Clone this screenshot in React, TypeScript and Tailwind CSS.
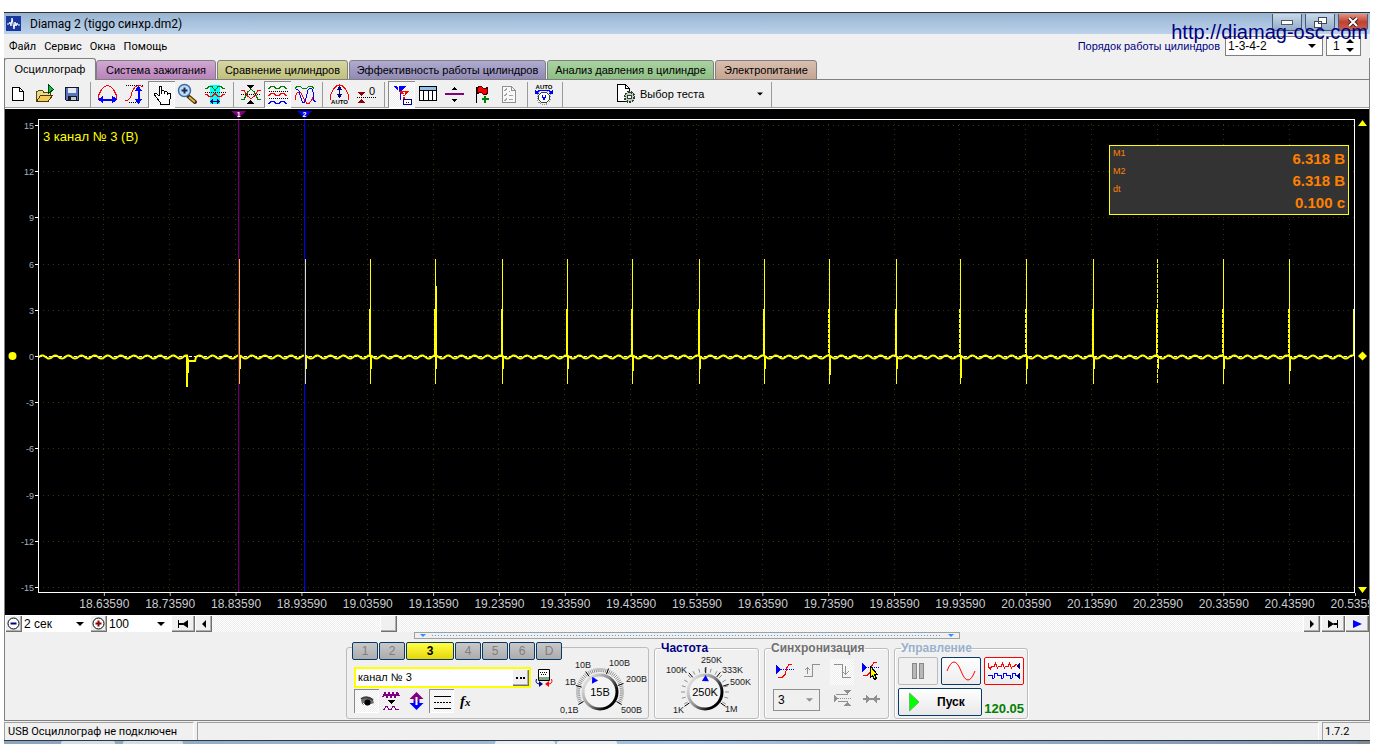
import React, { useState } from "react";
import type { ReactNode } from "react";

const tabs = [
  { label: "Осциллограф", cls: "h-[22px] w-[92px] bg-[#f0f0f0] pb-px border-b-0" },
  { label: "Система зажигания", cls: "h-[20px] w-[120px] bg-linear-to-b from-[#d0a8d2] to-[#b983bb] border-b" },
  { label: "Сравнение цилиндров", cls: "h-[20px] w-[131px] bg-linear-to-b from-[#d6d6a4] to-[#c0c07c] border-b" },
  { label: "Эффективность работы цилиндров", cls: "h-[20px] w-[197px] bg-linear-to-b from-[#b0acd0] to-[#9089b5] border-b" },
  { label: "Анализ давления в цилиндре", cls: "h-[20px] w-[167px] bg-linear-to-b from-[#aad2a2] to-[#8cbf82] border-b" },
  { label: "Электропитание", cls: "h-[20px] w-[102px] bg-linear-to-b from-[#d8bfb0] to-[#c6a490] border-b" },
];

const dither =
  "bg-[repeating-conic-gradient(#ffffff_0_25%,#eeeeee_0_50%)] bg-[length:2px_2px]";

function Icon({ w = 27, h = 27, smooth, children }: { w?: number; h?: number; smooth?: boolean; children: ReactNode }) {
  return (
    <svg
      width={w}
      height={h}
      viewBox={`0 0 ${w} ${h}`}
      fill="none"
      aria-hidden="true"
      shapeRendering={smooth ? "auto" : "crispEdges"}
      className="block shrink-0"
    >
      {children}
    </svg>
  );
}

function Tool({ label, pressed, children }: { label: string; pressed?: boolean; children: ReactNode }) {
  return (
    <button
      type="button"
      aria-label={label}
      className={
        pressed
          ? `h-[27px] w-[27px] overflow-hidden shadow-[inset_1px_1px_0_#8a8a8a,inset_-1px_-1px_0_#ffffff] ${dither}`
          : "h-[27px] w-[27px] overflow-hidden"
      }
    >
      <Icon>{children}</Icon>
    </button>
  );
}

function Sep() {
  return (
    <span className="flex w-2 justify-center">
      <span className="h-[25px] w-px bg-[#9a9a9a]" />
    </span>
  );
}

const RED = "#ff0000";
const BLUE = "#0000ff";
const GREEN = "#008000";

function Toolbar() {
  return (
    <div className="flex h-[29px] items-center border-b border-white bg-[#f0f0f0] shadow-[inset_0_-1px_0_#a0a0a0]">
      <Tool label="Новый">
        <path d="M7.500 6.500h7l4 4v9h-11z" fill="#fff" stroke="#000" />
        <path d="M14.500 6.500v4h4" stroke="#000" />
      </Tool>
      <Tool label="Открыть">
        <path d="M4.500 20.500v-10h1l1-1h4l1 1.500h7v3" fill="#e8d890" stroke="#5a4a00" />
        <path d="M4.500 20.500l4-6h12l-4.500 6z" fill="#f4c95c" stroke="#4a3a00" />
        <path d="M16.500 3.500l5 5-5 4z" fill="#00c838" stroke="#003810" />
      </Tool>
      <Tool label="Сохранить">
        <path d="M6.500 6.500h13v13h-12l-1-1z" fill="#5a76b8" stroke="#101830" />
        <path d="M9 7h8v5H9z" fill="#e4eaf4" />
        <path d="M9 15h8v4H9z" fill="#c8c8c8" stroke="#101830" />
        <path d="M10 16h2v3h-2z" fill="#101830" />
      </Tool>
      <Sep />
      <Tool label="Масштаб по времени">
        <path d="M4.500 18.500v-4l3-6 3-3 3-1 3 1 3 3 3 6v4" stroke={RED} />
        <path d="M8 18.500h11" stroke={BLUE} strokeWidth="2" />
        <path d="M4 18.500l5-4v8zM23 18.500l-5-4v8z" fill={BLUE} />
      </Tool>
      <Tool label="Масштаб по напряжению">
        <path d="M5 4.500h18M8 21.500h9" stroke="#000" strokeDasharray="1 1" />
        <path d="M3.500 19.500h3l3-3 2-7 3-4 3-1h2l3 2" stroke={RED} />
        <path d="M17.500 9v10" stroke={BLUE} strokeWidth="2" />
        <path d="M17.500 5l4 5h-8zM17.500 23l4-5h-8z" fill={BLUE} />
      </Tool>
      <Tool label="Рука" pressed>
        <path
          d="M11.500 15V6.500q0-1 1-1t1 1V13v-2.500q1.500-1.500 3 0V13v-2q1.500-1 3 .500V14v-1.500q2-1 3 .5v4l-1.500 3v3h-9v-2l-4-5-2-3q1-2 3 0l2.500 2.500"
          fill="#fff"
          stroke="#000"
        />
      </Tool>
      <button type="button" aria-label="Лупа" className="h-[27px] w-[27px]">
        <Icon smooth>
          <path d="M13 15l7 6" stroke="#3a2a00" strokeWidth="4" strokeLinecap="round" />
          <path d="M14 16l6 5" stroke="#e8b040" strokeWidth="2" />
          <circle cx="9.500" cy="9.500" r="6" fill="#c4dcf4" stroke="#3a6ea8" strokeWidth="1.500" />
          <path d="M6.500 9.500h6M9.500 6.500v6" stroke="#103060" strokeWidth="2" />
        </Icon>
      </button>
      <Tool label="Интервал">
        <path d="M8 4h10v19H8z" fill="#00ffff" />
        <path d="M3 7.500h2l2-2h3l3 4 3-4h3l2 2h2" stroke={GREEN} />
        <path d="M3 11.500h21" stroke="#000" strokeDasharray="1 1" />
        <path d="M3 13.500h2l2 2h3l3-3 3 3h3l2-2h2" stroke={RED} />
        <path d="M10 20.500h7" stroke="#000080" />
        <path d="M8 20.500l3-3v6zM18 20.500l-3-3v6z" fill="#000080" />
      </Tool>
      <Sep />
      <Tool label="Совместить">
        <path d="M4 18.500h3l4-8 3-2 3 2 4 8h3" stroke={GREEN} />
        <path d="M4 9.500h3l4 6 3 2 3-2 4-6h3" stroke={RED} />
        <path d="M4 13.500h20" stroke="#000" strokeDasharray="1 1" />
        <path d="M10 4h7l-3.500 4zM10 23h7l-3.500-4z" fill="#000" />
      </Tool>
      <Tool label="Разнести" pressed>
        <path d="M4 7.500h1l2-2h3l2 2h3l2-2h3l2 2h1" stroke={GREEN} />
        <path d="M5 10.500h19M5 17.500h19" stroke="#000" strokeDasharray="1 1" />
        <path d="M4 14.500h1l2-2h3l2 2h3l2-2h3l2 2h1" stroke={RED} />
        <path d="M4 22.500h1l2-2h3l2 2h3l2-2h3l2 2h1" stroke={BLUE} />
      </Tool>
      <Tool label="Наложить">
        <path d="M4 7.500l2-2h3l3 2h3l3-2h3l2 2" stroke={GREEN} />
        <path d="M4.500 19v-4l2-4h3l2 4 2 4 2 3h3l3-4 1-4" stroke={RED} />
        <path d="M4.500 8h2l2 3 1 5 2 5h2l2-5 1-6 2-3h2l2 5v7l2 2" stroke={BLUE} />
      </Tool>
      <Sep />
      <Tool label="Авто масштаб">
        <path d="M4.500 19v-5l3-6 3-3 3-1 3 1 3 3 3 6v5" stroke={RED} />
        <path d="M13.500 6v9" stroke="#000080" />
        <path d="M13.500 5l3 4h-6zM13.500 17l3-4h-6z" fill="#000080" />
        <text x="13.500" y="23" textAnchor="middle" className="fill-black font-['Liberation_Sans'] text-[6px] font-bold">AUTO</text>
      </Tool>
      <Tool label="Ноль">
        <path d="M4 11h8l-4 4zM4 22h8l-4-4z" fill="#900000" />
        <path d="M4 16.500h19" stroke="#000" strokeDasharray="1 1" />
        <text x="19" y="14" textAnchor="middle" className="fill-black font-['Liberation_Sans'] text-[11px]">0</text>
      </Tool>
      <Sep />
      <Tool label="Маркеры" pressed>
        <path d="M5 5h13l-5 6v8h-1v-8z" fill={BLUE} />
        <path d="M10 10h11l-4 5v6h-2v-6z" fill={RED} />
        <path d="M9 6l1-1v5" stroke="#fff" />
        <path d="M14.500 11.500h2v2h-2v2h2" stroke="#fff" />
        <path d="M15.500 18.500h8v5h-8z" fill="#fff" stroke="#000080" />
        <path d="M18 21.500h4" stroke="#000080" strokeDasharray="1 1" />
      </Tool>
      <Tool label="Таблица">
        <path d="M4.500 5.500h17v14h-17z" fill="#fff" stroke="#000" />
        <path d="M5 6h16v3H5z" fill="#90c0f0" />
        <path d="M4 9.500h18M8.500 9v11M13.500 9v11M17.500 9v11" stroke="#000" />
      </Tool>
      <Tool label="Линия">
        <path d="M3 13h19" stroke="#800080" strokeWidth="2" />
        <path d="M9.500 9h6l-3-3zM9.500 18h6l-3 3z" fill="#000" />
      </Tool>
      <Tool label="Флаг">
        <path d="M7.500 6v16" stroke="#000" />
        <path d="M8.500 6.500q3-2 5 0t5 0v6q-3 2-5 0t-5 0z" fill={RED} stroke="#400000" />
        <path d="M16 15v7M13 18h7" stroke={GREEN} strokeWidth="2" />
      </Tool>
      <Tool label="Список">
        <path d="M6.500 5.500h9l4 4v12h-13z" fill="#f8f8f8" stroke="#909090" />
        <path d="M15.500 5.500v4h4" stroke="#909090" />
        <path d="M8 9l1 1 2-3M8 14l1 1 2-3M8 19l1 1 2-3M13 10.500h1M13 14.500h4M13 18.500h4" stroke="#a0a0a0" />
      </Tool>
      <Sep />
      <Tool label="Авто регулятор">
        <text x="13" y="8" textAnchor="middle" className="fill-black font-['Liberation_Sans'] text-[6px] font-bold">AUTO</text>
        <circle cx="13" cy="16.500" r="7" stroke="#909090" strokeDasharray="1 1" />
        <circle cx="13" cy="16.500" r="5.500" fill="#fff" stroke="#404040" />
        <path d="M6 10.500l3-1h8l3 1" stroke={BLUE} />
        <path d="M4 8v5h4zM22 8v5h-4z" fill={BLUE} />
        <path d="M11 14l2 5 2-5" stroke={BLUE} />
      </Tool>
      <Sep />
      <div className="ml-[48px] flex w-[153px] items-center pr-1">
        <Icon w={24} h={24}>
          <path d="M3.500 2.500h8l4 4v13h-12z" fill="#fff" stroke="#000" />
          <path d="M11.500 2.500v4h4" stroke="#000" />
          <circle cx="15.500" cy="15" r="5" fill="#c0d0c0" stroke="#304030" strokeWidth="2" strokeDasharray="2 1" />
          <circle cx="15.500" cy="15" r="2" fill="#fff" stroke="#304030" />
        </Icon>
        <select aria-label="Тест" className="flex-1 appearance-none bg-transparent pl-0.5 font-['Liberation_Sans',sans-serif] text-[11px]">
          <option>Выбор теста</option>
        </select>
        <Caret small />
      </div>
      <Sep />
    </div>
  );
}

function Caret({ small }: { small?: boolean }) {
  return (
    <svg width={small ? 6 : 8} height="4" viewBox="0 0 8 4" aria-hidden="true" className="pointer-events-none shrink-0">
      <path d="M0 0h8L4 4z" fill="#000" />
    </svg>
  );
}

const spikes = [
  { x: 201, tail: 369 }, { x: 267, tail: 369 }, { x: 332, tail: 369 }, { x: 397, tail: 369, extra: 286 },
  { x: 464, tail: 369 }, { x: 529, tail: 369 }, { x: 594, tail: 371 }, { x: 661, tail: 369 }, { x: 726, tail: 369 },
  { x: 791, tail: 375, dash: true }, { x: 858, tail: 369 }, { x: 922, tail: 378, dash: true }, { x: 988, tail: 369, dash: true },
  { x: 1055, tail: 369 }, { x: 1119, tail: 369, dashTop: true }, { x: 1185, tail: 369, dash: true }, { x: 1251, tail: 371, dash: true },
];

function wave() {
  const pts: string[] = [];
  for (let x = 0; x <= 1315; x += 1) {
    let y = 248 - 1.6 * Math.sin(((x - 1) / 13.1) * 2 * Math.PI);
    if (x > 149 && x < 158) y = 252;
    pts.push(`${x} ${y.toFixed(1)}`);
  }
  return "M" + pts.join("L");
}
const wavePath = wave();
const rows = Array.from({ length: 11 }, (_, i) => ({ v: 15 - 3 * i, y: 16.5 + Math.round(46.2 * i) }));
const cols = Array.from({ length: 20 }, (_, i) => ({ pct: `${(i + 1) * 5}%`, label: (18.6359 + i * 0.1).toFixed(5) }));

function Marker({ x, n, color }: { x: string; n: string; color: string }) {
  return (
    <svg x={x} y="0" overflow="visible">
      <path d="M-7 2h15L.5 9z" fill={color} />
      <rect x="0" y="6" width="1" height="477" fill={color} />
      <text x="0.5" y="8" textAnchor="middle" className="fill-white font-['Liberation_Sans'] text-[7px] font-bold">{n}</text>
    </svg>
  );
}

function Chart() {
  return (
    <div className="relative flex h-[506px] overflow-hidden bg-black font-['Liberation_Sans',sans-serif]">
      <svg width="33" height="506" className="shrink-0">
        <circle cx="7.500" cy="247" r="4" fill="#ffff00" />
        {rows.map((r) => (
          <g key={r.v}>
            <text x="29" y={r.y + 3} textAnchor="end" className="fill-[#a8b4c0] text-[9px]">{r.v}</text>
            <rect x="30" y={r.y - 0.5} width="3" height="1" fill="#fff" />
          </g>
        ))}
      </svg>
      <svg height="506" className="min-w-0 flex-1 overflow-visible">
        {rows.map((r) => (
          <line key={r.v} x1="5" x2="100%" y1={r.y} y2={r.y} stroke="#34340c" strokeDasharray="1 4" />
        ))}
        <g shapeRendering="crispEdges">
          {cols.slice(0, 19).map((c) => (
            <line key={c.label} x1={c.pct} x2={c.pct} y1="15" y2="483" stroke="#34340c" strokeDasharray="1 4" />
          ))}
        </g>
        {cols.map((c) => (
          <svg key={c.label} x={c.pct} overflow="visible">
            <rect x="0" y="484" width="1" height="3" fill="#c0c0c0" />
            <text x="0.500" y="499" textAnchor="middle" className="fill-[#c8ccd0] text-[12px]">{c.label}</text>
          </svg>
        ))}
        <svg width="100%" height="506" viewBox="0 0 1317 506" preserveAspectRatio="none">
          <path d="M1 247.500H1316" stroke="#fff" strokeDasharray="3 2" />
          <path d={wavePath} stroke="#ffff00" strokeWidth="2" fill="none" />
          <path d="M148 247h1v31h-1zM149 250h1v28h-1zM150 250h1v14h-1z" fill="#ffff00" />
          {spikes.map((s) => (
            <g key={s.x} fill="#ffff00" stroke="none" shapeRendering="crispEdges">
              <line x1={s.x + 0.5} x2={s.x + 0.5} y1="150" y2="275" stroke="#ffff00" strokeDasharray={s.dashTop ? "4 1" : undefined} />
              <line x1={s.x - 0.5} x2={s.x - 0.5} y1="200" y2="247" stroke="#ffff00" strokeDasharray={s.dash ? "4 1" : undefined} />
              <rect x={s.x + 1} y="247" width="1" height={s.tail - 356} />
              {s.extra && <rect x={s.x + 1} y="177" width="1" height="70" />}
            </g>
          ))}
          <rect x="1315" y="200" width="1" height="47" fill="#ffff00" />
        </svg>
        <Marker x="15.2%" n="1" color="#800080" />
        <Marker x="20.2%" n="2" color="#0000ff" />
        <rect x="0" y="10" width="100%" height="1" fill="#fff" />
        <rect x="0" y="483" width="100%" height="1" fill="#fff" />
        <rect x="0" y="10" width="1" height="474" fill="#fff" />
        <svg x="100%" overflow="visible">
          <rect x="-1" y="10" width="1" height="474" fill="#fff" />
        </svg>
        <text x="5" y="32" className="fill-[#ffff00] text-[13px]">3 канал № 3 (В)</text>
      </svg>
      <svg width="14" height="506" className="shrink-0" fill="#ffff00">
        <path d="M3 17h9l-4.500-6zM3 478h9l-4.500 6zM3 247l4.500-4.500L12 247l-4.500 4.500z" />
      </svg>
      <dl className="absolute top-9 right-5 grid h-[70px] w-[240px] grid-cols-2 border border-[#ffff00] bg-[#333333] px-[3px] text-[#ff8000]">
        <div className="flex flex-col text-[9px] leading-[18px]">
          <dt className="-mt-0.5">М1</dt>
          <dt>М2</dt>
          <dt>dt</dt>
        </div>
        <div className="flex flex-col pt-0.5 text-right text-[15px] leading-[22px] font-bold whitespace-nowrap">
          <dd>6.318 В</dd>
          <dd>6.318 В</dd>
          <dd>0.100 с</dd>
        </div>
      </dl>
    </div>
  );
}

const raised =
  "flex h-[17px] shrink-0 items-center justify-center bg-[#f0f0f0] shadow-[inset_1px_1px_0_#ffffff,inset_-1px_-1px_0_#707070,inset_-2px_-2px_0_#b0b0b0]";

function ScrollRow() {
  return (
    <div className="flex h-[17px] items-center">
      <button type="button" aria-label="Уменьшить" className={`${raised} w-[17px]`}>
        <Icon w={15} h={15} smooth>
          <circle cx="7.500" cy="7.500" r="5.500" fill="#fff" stroke="#000" />
          <path d="M4.500 7.500h6" stroke="#000080" strokeWidth="2" />
        </Icon>
      </button>
      <div className="flex h-full w-[68px] items-center bg-white pr-1.5">
        <select aria-label="Развёртка" className="w-full appearance-none bg-transparent pl-0.5 text-[12px]"><option>2 сек</option></select>
        <Caret />
      </div>
      <button type="button" aria-label="Увеличить" className={`${raised} w-[17px]`}>
        <Icon w={15} h={15} smooth>
          <circle cx="7.500" cy="7.500" r="5.500" fill="#fff" stroke="#000" />
          <path d="M4.500 7.500h6M7.500 4.500v6" stroke="#900000" strokeWidth="2" />
        </Icon>
      </button>
      <div className="flex h-full w-[64px] items-center bg-white pr-1.5">
        <select aria-label="Масштаб" className="w-full appearance-none bg-transparent pl-0.5 text-[12px]"><option>100</option></select>
        <Caret />
      </div>
      <button type="button" aria-label="В начало" className={`${raised} w-6`}>
        <Icon w={12} h={8} smooth><path d="M1 0h1v8H1zM11 0v8L5 4zM2 3h4v2H2z" fill="#000" /></Icon>
      </button>
      <button type="button" aria-label="Назад" className={`${raised} w-[17px]`}>
        <Icon w={8} h={8} smooth><path d="M6 0v8L2 4z" fill="#000" /></Icon>
      </button>
      <div className={`flex h-full flex-1 ${dither}`}>
        <span className={`${raised} ml-[168px] w-[17px]`} />
      </div>
      <button type="button" aria-label="Вперёд" className={`${raised} w-[17px]`}>
        <Icon w={8} h={8} smooth><path d="M2 0v8l4-4z" fill="#000" /></Icon>
      </button>
      <button type="button" aria-label="В конец" className={`${raised} ml-px w-6`}>
        <Icon w={12} h={8} smooth><path d="M10 0h1v8h-1zM1 0v8l6-4zM6 3h4v2H6z" fill="#000" /></Icon>
      </button>
      <button type="button" aria-label="Воспроизвести" className={`${raised} w-6`}>
        <Icon w={9} h={8} smooth><path d="M0 0v8l9-4z" fill="#0000ff" /></Icon>
      </button>
    </div>
  );
}

const pt = (cx: number, cy: number, r: number, deg: number) => {
  const a = (deg * Math.PI) / 180;
  return [cx + r * Math.sin(a), cy - r * Math.cos(a)];
};

function Knob({ id, cx, cy, value, angle, majors, labels, dense }: {
  id: string; cx: number; cy: number; value: string; angle: number; majors: number[];
  labels: { t: string; x: number; y: number }[]; dense?: boolean;
}) {
  const step = dense ? 5 : 15;
  const ticks: number[] = [];
  for (let d = -120; d <= 120; d += step) ticks.push(d);
  const p = pt(cx, cy, 13, angle);
  return (
    <g className="font-['Liberation_Sans',sans-serif]">
      <defs>
        <linearGradient id={id} x1="0" y1="0.2" x2="1" y2="0.9">
          <stop offset="0" stopColor="#e8e8e8" />
          <stop offset="0.45" stopColor="#909090" />
          <stop offset="0.8" stopColor="#000" />
        </linearGradient>
      </defs>
      {ticks.map((d) => {
        const [x1, y1] = pt(cx, cy, 20, d);
        const [x2, y2] = pt(cx, cy, 24, d);
        return <line key={d} x1={x1} y1={y1} x2={x2} y2={y2} stroke="#909090" />;
      })}
      {majors.map((d) => {
        const [x1, y1] = pt(cx, cy, 19, d);
        const [x2, y2] = pt(cx, cy, 25, d);
        return <line key={d} x1={x1} y1={y1} x2={x2} y2={y2} stroke="#000" />;
      })}
      <circle cx={cx} cy={cy} r="17" fill="#f4f4f4" stroke={`url(#${id})`} strokeWidth="3" />
      <path d="M0-4l3.500 6h-7z" fill="#0000ff" transform={`translate(${p[0]} ${p[1]}) rotate(${angle})`} />
      <text x={cx} y={cy + 4} textAnchor="middle" className="fill-black text-[11px]">{value}</text>
      {labels.map((l) => (
        <text key={l.t} x={l.x} y={l.y} className="fill-[#202020] text-[9px]">{l.t}</text>
      ))}
    </g>
  );
}

const group = "rounded-[3px] border border-[#bcbcbc] shadow-[inset_1px_1px_0_#ffffff,1px_1px_0_#ffffff]";
const blueBtn = "border border-[#0a3a6a] rounded-[2px]";
const channels = ["1", "2", "3", "4", "5", "6", "D"];

function Panels() {
  const [name, setName] = useState("канал № 3");
  return (
    <div className="flex items-end justify-center gap-[5px] pb-px">
      <fieldset className="flex w-[303px] rounded-[3px] border border-[#bcbcbc]">
        <legend className="ml-[5px] flex h-[10px] items-start gap-px">
          {channels.map((c) => (
            <button
              key={c}
              type="button"
              className={
                c === "3"
                  ? `h-[18px] w-12 shrink-0 bg-linear-to-b from-[#ffff40] to-[#e6d800] text-[12px] leading-4 font-bold ${blueBtn}`
                  : `h-[18px] w-[26px] shrink-0 bg-linear-to-b from-[#c8c8c8] to-[#acacac] text-[12px] leading-4 text-[#808080] ${blueBtn}`
              }
            >
              {c}
            </button>
          ))}
        </legend>
        <div className="flex w-[206px] flex-col gap-px pt-[15px] pl-[7px]">
          <div className="flex items-center gap-1">
            <div className="flex h-[21px] w-[177px] border-2 border-[#ffff00] bg-white">
              <input
                aria-label="Имя канала"
                value={name}
                onChange={(e) => setName(e.target.value)}
                className="min-w-0 flex-1 bg-transparent pl-0.5 text-[11px] outline-none"
              />
              <button type="button" aria-label="Выбрать" className={`${raised} w-[17px]`}>
                <Icon w={9} h={3}><path d="M0 1h2v2H0zM3.500 1h2v2h-2zM7 1h2v2H7z" fill="#000" /></Icon>
              </button>
            </div>
            <button type="button" aria-label="Настройка канала">
              <Icon w={18} h={20} smooth>
                <path d="M3.500 1.500h11v11h-11z" fill="#fff" stroke="#000" />
                <path d="M5 4.500h8M6 6.500h5" stroke="#000" strokeDasharray="1 1" />
                <path d="M4 9h10v3H4z" fill="#80a880" />
                <path d="M1.500 11q-2 5 4 5" stroke="#000080" />
                <path d="M16.500 11q2 5-4 5" stroke={RED} />
                <path d="M14 13v6l-4-3z" fill={RED} />
                <path d="M4 13v6l4-3z" fill="#000080" />
              </Icon>
            </button>
          </div>
          <div className="flex items-center">
            <button type="button" aria-label="Показать" className={`h-6 w-[25px] shadow-[inset_1px_1px_0_#8a8a8a,inset_-1px_-1px_0_#fff] ${dither}`}>
              <Icon w={25} h={24} smooth>
                <path d="M7 11q6-5 12 0l1 3q-6 4-12 1z" fill="#707070" />
                <path d="M7 10q6-4 12 1" stroke="#404040" strokeWidth="2" />
                <circle cx="13.500" cy="13.500" r="3" fill="#000" />
                <path d="M9 14l2 2M16 16l3-1" stroke="#fff" />
              </Icon>
            </button>
            <button type="button" aria-label="Сглаживание" className="h-6 w-6">
              <Icon w={24} h={24}>
                <path d="M4 8l2-4 2 4 2-4 2 4 2-4 2 4 2-4 2 3" stroke="#800080" strokeWidth="2" />
                <path d="M9 11h7l-3.500 4z" fill="#000" />
                <path d="M4 20.500h1l2-3h1l2 3h2l2-3h1l2 3h3" stroke="#800080" />
              </Icon>
            </button>
            <button type="button" aria-label="Инвертировать" className="h-6 w-[26px]">
              <Icon w={26} h={24} smooth>
                <path d="M13.500 3l7 7h-4v2h-6v-2h-4z" fill="#800080" />
                <path d="M13.500 21l7-7h-4v-2h-6v2h-4z" fill={BLUE} />
                <path d="M13.500 8v8" stroke="#fff" strokeWidth="2" />
              </Icon>
            </button>
            <button type="button" aria-label="Связь" className={`h-6 w-[25px] shadow-[inset_1px_1px_0_#8a8a8a,inset_-1px_-1px_0_#fff] ${dither}`}>
              <Icon w={25} h={24}>
                <path d="M5 7.500h17M5 19.500h17" stroke="#000" />
                <path d="M5 13.500h17" stroke="#000" strokeDasharray="2 1" />
              </Icon>
            </button>
            <button type="button" aria-label="Функция" className="h-6 w-6 pl-1.5 text-left font-['Liberation_Serif',serif] text-[15px] leading-6 font-bold italic">
              f<span className="text-[11px]">x</span>
            </button>
          </div>
        </div>
        <svg width="94" height="66" className="shrink-0">
          <Knob
            id="knobVolt" cx={47} cy={40} value="15В" angle={-27} dense
            majors={[-120, -75, -35, 20, 70, 120]}
            labels={[
              { t: "10В", x: 22, y: 16 }, { t: "100В", x: 56, y: 14 }, { t: "1В", x: 12, y: 33 },
              { t: "200В", x: 73, y: 30 }, { t: "0,1В", x: 7, y: 61 }, { t: "500В", x: 68, y: 61 },
            ]}
          />
        </svg>
      </fieldset>

      <fieldset className={`w-[105px] ${group}`}>
        <legend className="ml-1.5 h-[14px] text-[12px] leading-[14px] font-bold text-[#000080]">Частота</legend>
        <svg width="103" height="63" className="block overflow-visible">
          <Knob
            id="knobFreq" cx={50} cy={37} value="250K" angle={2}
            majors={[-125, -40, 2, 38, 72, 125]}
            labels={[
              { t: "250K", x: 46, y: 8 }, { t: "100K", x: 11, y: 18 }, { t: "333K", x: 67, y: 18 },
              { t: "500K", x: 75, y: 30 }, { t: "1K", x: 18, y: 58 }, { t: "1M", x: 70, y: 57 },
            ]}
          />
        </svg>
      </fieldset>

      <fieldset className={`w-[125px] ${group}`}>
        <legend className="ml-1.5 h-[14px] text-[12px] leading-[14px] font-bold text-[#707070]">Синхронизация</legend>
        <div className="grid h-[63px] grid-cols-4 content-start items-start gap-y-1 pt-1 pl-1.5">
          <button type="button" aria-label="Уровень">
            <Icon w={26} h={26}>
              <path d="M6 10.500h17" stroke={BLUE} strokeDasharray="1 1" />
              <path d="M5 6v9l5-4.500z" fill={BLUE} />
              <path d="M7 18.500h4l3-3 2-7 2-3h3" stroke={RED} />
            </Icon>
          </button>
          <button type="button" aria-label="Фронт">
            <Icon w={26} h={26}><path d="M4 17.500h8.500v-12h7M7.500 15V8M4.500 11.500l3-3 3 3" stroke="#909090" /></Icon>
          </button>
          <button type="button" aria-label="Спад" className={`w-6 ${dither}`}>
            <Icon w={24} h={26}><path d="M4 5.500h8.500v13h8M15.500 7v8M12.500 12.500l3 3 3-3" stroke="#909090" /></Icon>
          </button>
          <button type="button" aria-label="Выбор уровня">
            <Icon w={26} h={26}>
              <path d="M3 8.500h18" stroke={BLUE} strokeDasharray="1 1" />
              <path d="M3 4v9l5-4.500z" fill={BLUE} />
              <path d="M4 16.500h4l3-3 2-7 2-3h3" stroke={RED} />
              <path d="M11.500 7.500l7 8h-3l2 4-2 1-2-4-2 2z" fill="#ffff00" stroke="#000" />
            </Icon>
          </button>
          <div className="col-span-2 ml-0.5 flex h-[22px] w-[47px] items-center border border-[#909090] pr-1.5">
            <select aria-label="Канал синхронизации" className="w-full appearance-none bg-transparent pl-1 text-[12px]"><option>3</option></select>
            <svg width="7" height="4" viewBox="0 0 8 4" className="shrink-0"><path d="M0 0h8L4 4z" fill="#909090" /></svg>
          </div>
          <button type="button" aria-label="Границы">
            <Icon w={26} h={22}>
              <path d="M6 9.500h15" stroke="#909090" strokeDasharray="1 1" />
              <path d="M4 6v7l4-3.500zM14 1h7l-3.500 4zM14 17h7l-3.500-4z" fill="#909090" />
              <path d="M6 5.500h12M8 12.500h10" stroke="#909090" />
            </Icon>
          </button>
          <button type="button" aria-label="Центр">
            <Icon w={26} h={22}>
              <path d="M4 10h17" stroke="#909090" strokeWidth="2" />
              <path d="M7 5.500v9l5-4.500zM18 5.500v9l-5-4.500z" fill="#909090" />
            </Icon>
          </button>
        </div>
      </fieldset>

      <fieldset className={`w-[134px] ${group}`}>
        <legend className="ml-1.5 h-[14px] text-[12px] leading-[14px] font-bold text-[#9ab0cc]">Управление</legend>
        <div className="flex h-[63px] flex-col gap-[3px] px-[3px] pt-0.5">
          <div className="flex justify-between">
            <button type="button" aria-label="Пауза" className="flex h-7 w-10 items-center justify-center rounded-[2px] border border-[#bcbcbc]">
              <Icon w={12} h={16}><path d="M.5.500h4v15h-4zM7.500.500h4v15h-4z" fill="#b8b8b8" stroke="#888" /></Icon>
            </button>
            <button type="button" aria-label="Осциллограмма" className={`flex h-7 w-10 items-center justify-center bg-linear-to-b from-white to-[#ececec] ${blueBtn}`}>
              <Icon w={30} h={20} smooth><path d="M1 10q7-18 14 0t14 0" stroke={RED} /></Icon>
            </button>
            <button type="button" aria-label="Запись" className="flex h-7 w-10 items-center justify-center rounded-[2px] border border-[#ff0000] bg-linear-to-b from-white to-[#ececec]">
              <Icon w={34} h={20}>
                <path d="M1.500 2v4l2 2 1-3h3l1-3 2 5 1-2h3l1-3 2 5 1-2h3l1-3 2 5 1-2h2l2-2" stroke={RED} />
                <path d="M1 14.500h4l1 3h1l1-5h2l1 2h3l1 3h1l1-5h2l1 2h3l1 3h1l1-5h2l1 2h2" stroke={BLUE} />
                <path d="M33 2v6l-4-3zM33 12v6l-4-3z" fill="#000080" />
              </Icon>
            </button>
          </div>
          <div className="flex items-end justify-between">
            <button type="button" className={`flex h-7 w-[84px] items-center bg-linear-to-b from-white to-[#e8e8e8] pl-2.5 text-[12px] font-bold ${blueBtn}`}>
              <Icon w={11} h={20} smooth><path d="M.5 1v18L10 10z" fill="#00ff00" stroke="#60c060" /></Icon>
              <span className="ml-[17px]">Пуск</span>
            </button>
            <output className="text-[13px] leading-[14px] font-bold text-[#008000]">120.05</output>
          </div>
        </div>
      </fieldset>
    </div>
  );
}

const winBtn = "flex h-[17px] items-center justify-center rounded-b-[4px] border border-t-0 border-[#4a5a70]";

export default function App() {
  return (
    <div className="min-h-screen bg-white pt-3 pr-3 pl-1 font-['Liberation_Sans',sans-serif] text-[11px] text-black">
      <div className="relative flex flex-col overflow-hidden bg-[#f0f0f0]">
        <header className="flex h-[22px] items-center border-t border-[#303030] bg-linear-to-b from-[#98b4d2] to-[#bcd2ea] pr-0.5 pl-0.5">
          <Icon w={15} h={15} smooth>
            <path d="M0 0h15v15H0z" fill="#1838a0" />
            <path d="M1 8h2l1-2 1 4 1-8 2 11 1-7 1 4 1-3 1 2h2" stroke="#fff" />
          </Icon>
          <h1 className="ml-[9px] flex-1 font-['Roboto',sans-serif] text-[12px] leading-5">Diamag 2 (tiggo синхр.dm2)</h1>
          <div className="flex gap-[3px] self-start pt-px">
            <button type="button" aria-label="Свернуть" className={`w-[30px] bg-linear-to-b from-[#c8d8e8] to-[#94acc8] ${winBtn}`}>
              <Icon w={12} h={5}><path d="M.5.500h11v4H.5z" fill="#fff" stroke="#505a68" /></Icon>
            </button>
            <button type="button" aria-label="Развернуть" className={`w-[30px] bg-linear-to-b from-[#c8d8e8] to-[#94acc8] ${winBtn}`}>
              <Icon w={13} h={11}><path d="M4.500.500h8v6h-8zM.5 4.500h7v6h-7z" fill="#fff" stroke="#404858" /></Icon>
            </button>
            <button type="button" aria-label="Закрыть" className={`w-[30px] bg-linear-to-b from-[#e09080] via-[#c04030] to-[#c86050] ${winBtn}`}>
              <Icon w={12} h={10} smooth>
                <path d="M2 1l8 8M10 1L2 9" stroke="#402020" strokeWidth="4" />
                <path d="M2 1l8 8M10 1L2 9" stroke="#fff" strokeWidth="2" />
              </Icon>
            </button>
          </div>
        </header>

        <div className="flex h-[24px] items-center justify-between">
          <nav className="flex gap-2 pt-0.5 pl-[5px] font-['Roboto',sans-serif] text-[11px]">
            <a href="#file">Файл</a>
            <a href="#service">Сервис</a>
            <a href="#windows">Окна</a>
            <a href="#help">Помощь</a>
          </nav>
          <div className="flex items-center pr-[9px]">
            <label htmlFor="order" className="pr-[5px] text-[#000080]">Порядок работы цилиндров</label>
            <div className="flex h-5 w-[98px] items-center border border-[#808080] bg-white pr-1.5">
              <select id="order" className="w-full appearance-none bg-transparent pl-0.5 text-[12px]"><option>1-3-4-2</option></select>
              <Caret />
            </div>
            <div className="ml-[3px] flex h-5 w-[35px] items-center border border-[#808080] bg-white pr-1.5">
              <input aria-label="Цилиндр" defaultValue="1" inputMode="numeric" className="w-full min-w-0 bg-transparent pl-1.5 text-[12px] outline-none" />
              <Icon w={8} h={14} smooth><path d="M0 4h8L4 0zM0 9h8l-4 4z" fill="#000" /></Icon>
            </div>
          </div>
        </div>

        <div className="border-x border-[#808080]">
          <div role="tablist" className="-mx-px flex h-[22px] items-end shadow-[inset_0_-1px_0_#808080]">
            {tabs.map((t, i) => (
              <button
                key={t.label}
                type="button"
                role="tab"
                aria-selected={i === 0}
                className={`mr-px flex shrink-0 items-center justify-center rounded-t-[3px] border-x border-t border-[#808080] first:mr-0 ${t.cls} whitespace-nowrap`}
              >
                {t.label}
              </button>
            ))}
          </div>
          <Toolbar />
          <Chart />
          <ScrollRow />
          <div className="flex justify-center">
            <div className="flex h-[7px] w-[546px] items-center border border-[#a0a0a0] px-[5px]">
              <Icon w={6} h={3} smooth><path d="M0 0h6L3 3z" fill="#3090ff" /></Icon>
              <span className="mx-1.5 h-px flex-1 bg-[repeating-linear-gradient(90deg,#50a0f0_0_1px,transparent_1px_3px)]" />
              <Icon w={6} h={3} smooth><path d="M0 0h6L3 3z" fill="#3090ff" /></Icon>
            </div>
          </div>
          <div className="h-0.5" />
          <Panels />
        </div>

        <footer className="border-t border-[#808080] font-['Roboto',sans-serif] text-[11px]">
          <div className="mt-px flex h-[18px] gap-[3px] leading-[17px]">
            <p className="w-[190px] border-t border-l border-r border-t-[#a0a0a0] border-l-[#a0a0a0] border-r-white pl-[3px]">USB Осциллограф не подключен</p>
            <p className="flex-1 border-t border-l border-r border-t-[#a0a0a0] border-l-[#a0a0a0] border-r-white" />
            <p className="w-[48px] border-t border-l border-[#a0a0a0] pl-0.5">1.7.2</p>
          </div>
          <div className="flex h-1 border-t border-[#303840] bg-linear-to-r from-[#8ca4bc] via-[#a8c4e4] to-[#7c90a8]">
            <span className="ml-[57px] w-[54px] rounded-t-[2px] bg-[#d4dee8]" />
            <span className="ml-2 w-[60px] rounded-t-[2px] bg-[#d4dee8]" />
            <span className="ml-[312px] w-[60px] rounded-t-[2px] bg-[#e8eef4]" />
            <span className="ml-0.5 w-[60px] rounded-t-[2px] bg-[#e8eef4]" />
            <span className="mr-px ml-auto w-3 bg-[#808890]" />
          </div>
        </footer>

        <a href="http://diamag-osc.com" className="absolute top-[9px] right-[2px] text-[20px] leading-[22px] text-[#000080]">
          http://diamag-osc.com
        </a>
      </div>
    </div>
  );
}
